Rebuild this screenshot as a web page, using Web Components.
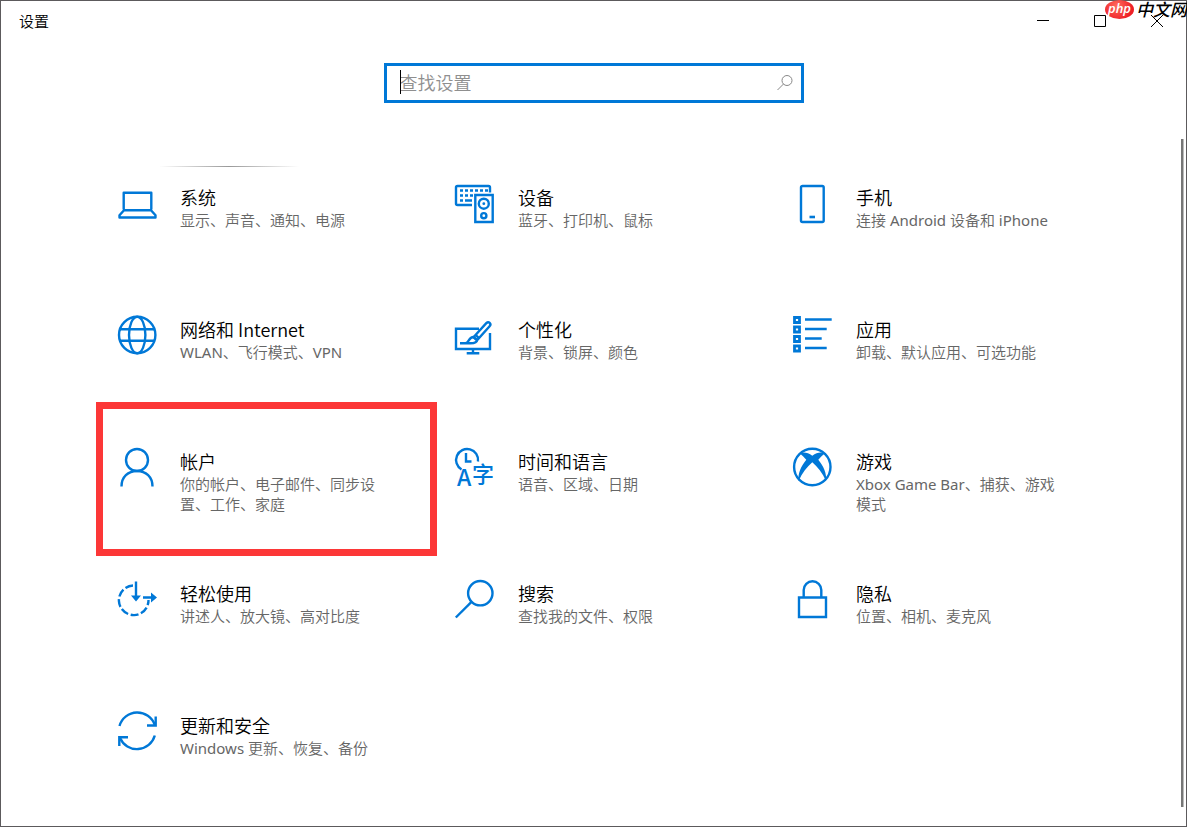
<!DOCTYPE html>
<html lang="zh-CN">
<head>
<meta charset="utf-8">
<meta name="viewport" content="width=device-width, initial-scale=1">
<title>设置</title>
<style>
  body {
    margin: 0;
    font-family: "Noto Sans", "Noto Sans CJK SC", sans-serif;
    color: #000;
    background: #fff;
  }
</style>
</head>
<body>
<settings-window>
  <window-bar slot="bar">设置</window-bar>
  <settings-search slot="search"></settings-search>
  <settings-tile icon="system" lit><span slot="title">系统</span>显示、声音、通知、电源</settings-tile>
  <settings-tile icon="devices"><span slot="title">设备</span>蓝牙、打印机、鼠标</settings-tile>
  <settings-tile icon="phone"><span slot="title">手机</span>连接 Android 设备和 iPhone</settings-tile>
  <settings-tile icon="network"><span slot="title">网络和 Internet</span>WLAN、飞行模式、VPN</settings-tile>
  <settings-tile icon="personal"><span slot="title">个性化</span>背景、锁屏、颜色</settings-tile>
  <settings-tile icon="apps"><span slot="title">应用</span>卸载、默认应用、可选功能</settings-tile>
  <settings-tile icon="accounts" marked><span slot="title">帐户</span>你的帐户、电子邮件、同步设置、工作、家庭</settings-tile>
  <settings-tile icon="time"><span slot="title">时间和语言</span>语音、区域、日期</settings-tile>
  <settings-tile icon="gaming"><span slot="title">游戏</span>Xbox Game Bar、捕获、游戏模式</settings-tile>
  <settings-tile icon="ease"><span slot="title">轻松使用</span>讲述人、放大镜、高对比度</settings-tile>
  <settings-tile icon="search"><span slot="title">搜索</span>查找我的文件、权限</settings-tile>
  <settings-tile icon="privacy"><span slot="title">隐私</span>位置、相机、麦克风</settings-tile>
  <settings-tile icon="update"><span slot="title">更新和安全</span>Windows 更新、恢复、备份</settings-tile>
</settings-window>
<site-badge></site-badge>

<script>
const ICONS = {
  system: `
    <path d="M6.700 25.500V8.700h27.600v16.800M7 26.300h27l4.500 5v2.200h-36v-2.200z" stroke-linejoin="round"/>`,
  devices: `
    <path d="M17 21H2.500Q1 21 1 19.500V3.500Q1 2 2.500 2H33.500Q35 2 35 3.500V8.500"/>
    <path d="M5 6.500h29" stroke-dasharray="3 2"/>
    <path d="M5 11.500h3M10 11.500h3M15 11.500h3M5 16.500h3M10 16.500h7"/>
    <path d="M20.300 11h17.400v27H20.300z"/>
    <circle cx="28.800" cy="19.700" r="5"/>
    <circle cx="28.800" cy="31.700" r="2.600"/>
    <circle cx="28.800" cy="19.700" r="1.400" fill="currentColor" stroke="none"/>`,
  phone: `
    <rect x="8" y="2" width="22.700" height="36" rx="1.500"/>
    <path d="M16.500 33h5.500" stroke-width="2.600"/>`,
  network: `
    <circle cx="20.200" cy="19" r="18.200"/>
    <ellipse cx="20.200" cy="19" rx="8.200" ry="18.200"/>
    <path d="M3 13.300h34.400M3 24.700h34.400"/>`,
  personal: `
    <path d="M24 12.700H1V33h34V17"/>
    <path d="M18 33v4.300M11.700 37.300h12.600"/>
    <path d="M18.500 21.200L31.300 7.200c2.400-2.400 5.500.5 3.300 3L22 24.300z"/>
    <path d="M20.500 18.800l3.800 3.500"/>
    <path d="M5 27.300h10.500c4.500 0 6.500-1.800 6.500-3.500l-3.500-2.800c-5 0-4.300 6-8 6.300z"/>`,
  apps: `
    <path d="M1.500 1.500h5v5h-5zM1.500 11h5v5h-5zM1.500 20.500h5v5h-5zM1.500 30h5v5h-5z" stroke-width="2.800"/>
    <path d="M12 3.500h26.700M12 13h21.700M12 22.500h16.700M12 32h21.700"/>`,
  accounts: `
    <circle cx="20" cy="12" r="11"/>
    <path d="M4.500 38.500C4.500 29 11 23 20 23S35.500 29 35.500 38.500"/>`,
  time: `
    <path d="M6.500 21.500A11 11 0 1 1 23 13.500"/>
    <path d="M11 5v8.500h5.500"/>
    <text x="2" y="38" font-size="23" font-weight="500">A</text>
    <text x="17" y="34" font-size="22" font-weight="500">字</text>`,
  gaming: `
    <circle cx="19.300" cy="19" r="18.200"/>
    <path d="M7 5.500C11 3.500 15 5 19.300 7.700 23.600 5 27.600 3.500 31.600 5.500 29.500 7.500 27 9.500 25.300 11.800 30.500 18 34 26 33 33 29.500 25 24.500 18.500 19.300 14.200 14.100 18.500 9.100 25 5.600 33 4.600 26 8.100 18 13.300 11.800 11.600 9.500 9.100 7.500 7 5.500z" fill="currentColor" stroke="none"/>`,
  ease: `
    <path d="M16 5.500A14.800 14.800 0 1 0 31.500 20" stroke-dasharray="8 2.600"/>
    <path d="M19 1.500v15M26 17.500h9"/>
    <path d="M14 15.500h10L19 21.500zM34 12.500v10l6-5z" fill="currentColor" stroke="none"/>`,
  search: `
    <circle cx="25.300" cy="13.200" r="12.200"/>
    <path d="M16.500 21.800L.8 37.500"/>`,
  privacy: `
    <path d="M6 17.500h27V37H6z"/>
    <path d="M10.700 17.500V10a8.800 8.800 0 0 1 17.600 0v7.500"/>`,
  update: `
    <path d="M2.500 14A18.500 18.500 0 0 1 37.800 13M37.800 23.500A18.500 18.500 0 0 1 3 26"/>
    <path d="M30 13.500h8.700V4.500M11 25.300H2.300V34"/>`
};

class SettingsIcon extends HTMLElement {
  connectedCallback() {
    this.attachShadow({ mode: 'open' });
    this.shadowRoot.innerHTML = `
      <style>
        :host {
          display: block;
          flex: none;
          width: 40px;
          height: 40px;
          color: #0078d7;
        }
        svg {
          display: block;
          overflow: visible;
        }
        text {
          fill: currentColor;
          stroke: none;
          font-family: "Noto Sans CJK SC", sans-serif;
        }
      </style>
      <svg width="40" height="40" viewBox="0 0 40 40" fill="none" stroke="currentColor" stroke-width="2.400" aria-hidden="true">
        ${ICONS[this.getAttribute('name')]}
      </svg>
    `;
  }
}

class SettingsTile extends HTMLElement {
  connectedCallback() {
    this.attachShadow({ mode: 'open' });
    this.shadowRoot.innerHTML = `
      <style>
        :host {
          display: block;
          position: relative;
        }
        a {
          display: flex;
          gap: 23px;
          min-height: 112px;
          padding: 18px 48px 2px 22px;
          color: inherit;
          text-decoration: none;
        }
        .title {
          margin-top: 1px;
          font-family: "Noto Sans CJK SC", sans-serif;
          font-size: 18px;
          font-weight: 350;
          line-height: 25px;
        }
        .about {
          font-family: "Noto Sans", "Noto Sans CJK SC DemiLight", "Noto Sans CJK SC", sans-serif;
          font-size: 15px;
          line-height: 20px;
          color: #666;
        }
        /* pointer light on the top edge */
        :host([lit])::before {
          content: "";
          position: absolute;
          top: 0;
          left: 64px;
          width: 140px;
          height: 1px;
          background: linear-gradient(90deg, transparent, #999, transparent);
        }
        :host([marked])::after {
          content: "";
          position: absolute;
          inset: -28px -4px 6px 1px;
          border: 7px solid #fc3737;
          pointer-events: none;
        }
      </style>
      <a href="#${this.getAttribute('icon')}">
        <settings-icon name="${this.getAttribute('icon')}"></settings-icon>
        <div>
          <div class="title"><slot name="title"></slot></div>
          <div class="about"><slot></slot></div>
        </div>
      </a>
    `;
  }
}

class SettingsSearch extends HTMLElement {
  connectedCallback() {
    this.attachShadow({ mode: 'open' });
    this.shadowRoot.innerHTML = `
      <style>
        :host {
          display: block;
          width: 420px;
          max-width: 100%;
        }
        form {
          display: flex;
          align-items: center;
          box-sizing: border-box;
          height: 40px;
          padding: 0 8px 0 13px;
          border: 3px solid #0078d7;
          position: relative;
        }
        .caret {
          position: absolute;
          left: 13px;
          top: 4px;
          width: 1px;
          height: 24px;
          background: #000;
        }
        input {
          flex: 1;
          min-width: 0;
          height: 30px;
          padding: 0;
          border: 0;
          outline: 0;
          background: none;
          font: inherit;
          font-size: 18px;
          font-weight: 350;
        }
        input::placeholder {
          color: #8f8f8f;
          opacity: 1;
        }
        button {
          display: block;
          padding: 0;
          border: 0;
          background: none;
          color: #888;
        }
        svg {
          display: block;
        }
      </style>
      <form role="search">
        <input type="text" placeholder="查找设置" aria-label="查找设置">
        <span class="caret"></span>
        <button type="button" aria-label="搜索">
          <svg width="16" height="16" viewBox="0 0 16 16" fill="none" stroke="currentColor">
            <circle cx="10" cy="5.500" r="5"/>
            <path d="M6.500 9L.5 15"/>
          </svg>
        </button>
      </form>
    `;
  }
}

class WindowBar extends HTMLElement {
  connectedCallback() {
    this.attachShadow({ mode: 'open' });
    this.shadowRoot.innerHTML = `
      <style>
        :host {
          display: flex;
          align-items: flex-start;
          height: 40px;
          padding: 0 1px 0 18px;
          font-size: 15px;
          font-weight: 350;
        }
        .name {
          flex: 1;
          line-height: 40px;
        }
        button {
          display: grid;
          place-items: center;
          width: 57px;
          height: 40px;
          padding: 0;
          border: 0;
          background: none;
          color: #000;
        }
      </style>
      <span class="name"><slot></slot></span>
      <button type="button" aria-label="最小化">
        <svg width="12" height="12" viewBox="0 0 12 12" stroke="currentColor"><path d="M0 5.500h12"/></svg>
      </button>
      <button type="button" aria-label="最大化">
        <svg width="12" height="12" viewBox="0 0 12 12" fill="none" stroke="currentColor"><path d="M.5.500h11v11H.5z"/></svg>
      </button>
      <button type="button" aria-label="关闭">
        <svg width="12" height="12" viewBox="0 0 12 12" stroke="currentColor"><path d="M0 0l12 12M12 0L0 12"/></svg>
      </button>
    `;
  }
}

class SettingsWindow extends HTMLElement {
  connectedCallback() {
    this.attachShadow({ mode: 'open' });
    this.shadowRoot.innerHTML = `
      <style>
        :host {
          display: flex;
          flex-direction: column;
          box-sizing: border-box;
          min-height: 100vh;
          border: 1px solid #5c5a5c;
        }
        header {
          display: flex;
          justify-content: center;
          padding: 22px 16px 36px;
        }
        main {
          flex: 1;
          position: relative;
          padding: 27px 77px 0 94px;
        }
        .grid {
          display: grid;
          grid-template-columns: repeat(auto-fit, minmax(300px, 1fr));
        }
        .thumb {
          position: absolute;
          top: 0;
          right: 2px;
          bottom: 19px;
          width: 2px;
          background: #767676;
          border-right: 1px solid #bbb;
        }
      </style>
      <slot name="bar"></slot>
      <header><slot name="search"></slot></header>
      <main>
        <div class="grid"><slot></slot></div>
        <div class="thumb"></div>
      </main>
    `;
  }
}

class SiteBadge extends HTMLElement {
  connectedCallback() {
    this.attachShadow({ mode: 'open' });
    this.shadowRoot.innerHTML = `
      <style>
        :host {
          display: flex;
          align-items: center;
          gap: 2px;
          position: absolute;
          top: 0;
          right: 0;
          height: 19px;
          pointer-events: none;
        }
        .php {
          width: 29px;
          height: 19px;
          border-radius: 50%;
          background: radial-gradient(circle at 40% 30%, #ff6a5c, #ee2027 70%);
          color: #fff;
          font: italic 600 13px/16px "Open Sans", sans-serif;
          text-align: center;
        }
        .site {
          font-size: 17px;
          font-style: italic;
          font-weight: 500;
          line-height: 17px;
        }
      </style>
      <span class="php">php</span>
      <span class="site">中文网</span>
    `;
  }
}

customElements.define('settings-icon', SettingsIcon);
customElements.define('settings-tile', SettingsTile);
customElements.define('settings-search', SettingsSearch);
customElements.define('window-bar', WindowBar);
customElements.define('settings-window', SettingsWindow);
customElements.define('site-badge', SiteBadge);
</script>
</body>
</html>
